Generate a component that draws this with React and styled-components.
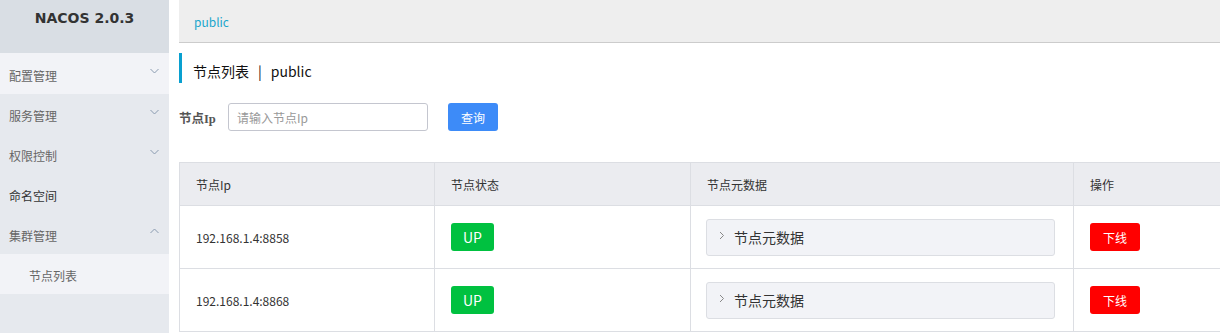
import React from "react";
import styled, { createGlobalStyle } from "styled-components";

const GlobalStyle = createGlobalStyle`
  html, body {
    margin: 0;
    padding: 0;
    background: #fff;
    overflow: hidden;
  }
  body {
    font-family: "Noto Sans CJK SC", "Noto Sans", "Liberation Sans", sans-serif;
    color: #333;
  }
`;

const Page = styled.div`
  display: flex;
  width: 1220px;
  height: 333px;
  overflow: hidden;
`;

const Sidebar = styled.div`
  width: 169px;
  flex-shrink: 0;
  background: #e6e9ee;
  display: flex;
  flex-direction: column;
`;

const Logo = styled.div`
  height: 53px;
  background: #d9dee4;
  display: flex;
  justify-content: center;
  padding-top: 10px;
  box-sizing: border-box;
  font-family: "DejaVu Sans", "Liberation Sans", sans-serif;
  font-weight: bold;
  font-size: 14px;
  color: #333;
`;

const MenuItem = styled.div`
  height: ${(p) => (p.first ? "41px" : "40px")};
  box-sizing: border-box;
  padding-top: 3px;
  display: flex;
  align-items: center;
  justify-content: space-between;
  padding-left: ${(p) => (p.sub ? "29px" : "9px")};
  padding-right: 10px;
  background: ${(p) => (p.light ? "#f2f3f7" : "transparent")};
  font-size: 12px;
  color: ${(p) => (p.dark ? "#333" : "#666")};
`;

const Chevron = ({ up }) => (
  <svg width="9" height="6" viewBox="0 0 9 6" style={{ marginTop: up ? -10 : -8 }}>
    <polyline
      points={up ? "0.5,5 4.5,1 8.5,5" : "0.5,1 4.5,5 8.5,1"}
      fill="none"
      stroke="#8a9bb0"
      strokeWidth="1"
    />
  </svg>
);

const Main = styled.div`
  flex: 1;
  margin-left: 10px;
  overflow: hidden;
`;

const TopBar = styled.div`
  height: 42px;
  background: #eeeeee;
  border-bottom: 1px solid #cccccc;
  display: flex;
  align-items: center;
  padding-left: 15px;
  font-size: 12px;
  color: #1ba6cc;
`;

const Title = styled.div`
  margin-top: 10px;
  height: 30px;
  box-sizing: border-box;
  padding-top: 6px;
  border-left: 3px solid #09a0d0;
  padding-left: 11px;
  display: flex;
  align-items: center;
  font-size: 14px;
  color: #111;
`;

const Sep = styled.span`
  margin: 0 9px;
`;

const SearchRow = styled.div`
  margin-top: 20px;
  display: flex;
  align-items: center;
`;

const Label = styled.label`
  width: 49px;
  font-size: 12.5px;
  font-weight: bold;
  color: #555;
  font-family: "Liberation Serif", "Noto Sans CJK SC", serif;
`;

const Input = styled.input`
  width: 200px;
  height: 28px;
  box-sizing: border-box;
  border: 1px solid #c4c6cf;
  border-radius: 3px;
  padding: 0 8px;
  font-size: 12px;
  font-family: inherit;
  outline: none;
  &::placeholder {
    color: #999;
  }
`;

const Button = styled.button`
  height: 28px;
  width: ${(p) => p.width || "50px"};
  border: none;
  border-radius: 3px;
  background: ${(p) => p.bg};
  color: #fff;
  font-size: ${(p) => p.size || "12px"};
  font-family: inherit;
  padding: 0;
  margin-left: ${(p) => p.ml || "0"};
`;

const Table = styled.table`
  margin-top: 31px;
  width: 1150px;
  table-layout: fixed;
  border-collapse: collapse;
  font-size: 12px;
`;

const Th = styled.th`
  height: 42px;
  background: #ebecf0;
  border: 1px solid #dcdee3;
  text-align: left;
  font-weight: normal;
  padding: 0 16px;
  color: #333;
`;

const Td = styled.td`
  height: 62px;
  border: 1px solid #dcdee3;
  padding: 0 16px;
  color: #333;
`;

const Meta = styled.div`
  height: 37px;
  box-sizing: border-box;
  width: 349px;
  margin-left: -1px;
  background: #f2f3f7;
  border: 1px solid #dcdee3;
  border-radius: 3px;
  display: flex;
  align-items: center;
  padding-left: 12px;
  font-size: 14px;
  color: #333;
  gap: 9px;
`;

const Arrow = () => (
  <svg width="6" height="9" viewBox="0 0 6 9" style={{ marginTop: -4 }}>
    <polyline points="1,1 4.5,4.5 1,8" fill="none" stroke="#888" strokeWidth="1" />
  </svg>
);

const nodes = ["192.168.1.4:8858", "192.168.1.4:8868"];

export default function App() {
  return (
    <Page>
      <GlobalStyle />
      <Sidebar>
        <Logo>NACOS 2.0.3</Logo>
        <MenuItem first light>
          配置管理 <Chevron />
        </MenuItem>
        <MenuItem>
          服务管理 <Chevron />
        </MenuItem>
        <MenuItem>
          权限控制 <Chevron />
        </MenuItem>
        <MenuItem dark>命名空间</MenuItem>
        <MenuItem>
          集群管理 <Chevron up />
        </MenuItem>
        <MenuItem sub light>
          节点列表
        </MenuItem>
      </Sidebar>
      <Main>
        <TopBar>public</TopBar>
        <Title>
          节点列表<Sep>|</Sep>public
        </Title>
        <SearchRow>
          <Label>节点Ip</Label>
          <Input placeholder="请输入节点Ip" />
          <Button bg="#3d8bf8" ml="20px">
            查询
          </Button>
        </SearchRow>
        <Table>
          <colgroup>
            <col style={{ width: 255 }} />
            <col style={{ width: 256 }} />
            <col style={{ width: 383 }} />
            <col style={{ width: 256 }} />
          </colgroup>
          <thead>
            <tr>
              <Th>节点Ip</Th>
              <Th>节点状态</Th>
              <Th>节点元数据</Th>
              <Th>操作</Th>
            </tr>
          </thead>
          <tbody>
            {nodes.map((ip) => (
              <tr key={ip}>
                <Td>{ip}</Td>
                <Td>
                  <Button bg="#00c140" width="43px" size="14px">
                    UP
                  </Button>
                </Td>
                <Td>
                  <Meta>
                    <Arrow />
                    节点元数据
                  </Meta>
                </Td>
                <Td>
                  <Button bg="#ff0000" width="50px">
                    下线
                  </Button>
                </Td>
              </tr>
            ))}
          </tbody>
        </Table>
      </Main>
    </Page>
  );
}
